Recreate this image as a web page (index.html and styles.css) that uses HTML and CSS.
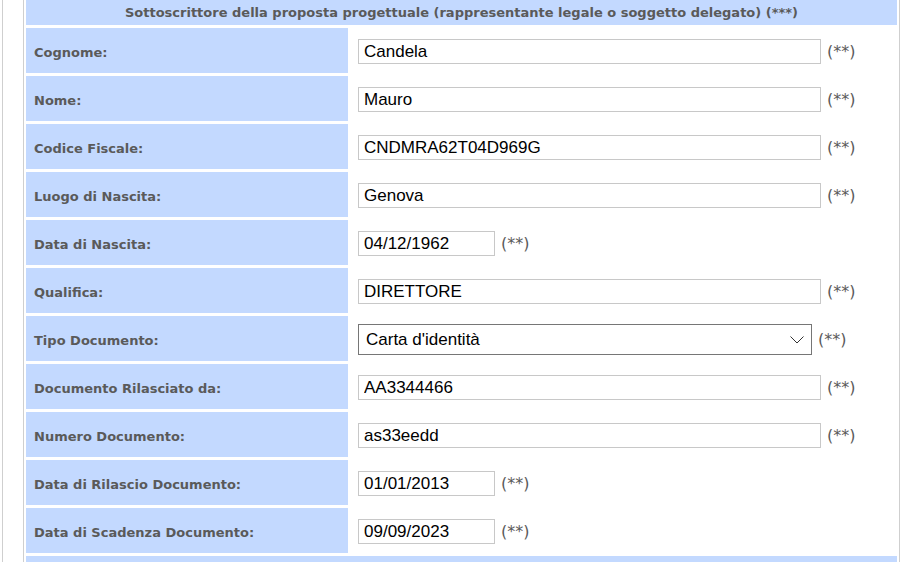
FILE: index.html
```html
<!DOCTYPE html>
<html lang="it">
<head>
    <meta charset="UTF-8">
    <meta name="viewport" content="width=device-width, initial-scale=1.0">
    <title>Sottoscrittore della proposta progettuale</title>
    <link rel="stylesheet" href="styles.css">
</head>
<body>

    <div class="page">
        <table class="form-table">
            <colgroup>
                <col class="col-label">
                <col class="col-field">
            </colgroup>
            <tr>
                <th colspan="2" class="section-title">Sottoscrittore della proposta progettuale (rappresentante legale o soggetto delegato) (***)</th>
            </tr>
            <tr>
                <td class="label">Cognome:</td>
                <td class="field"><input type="text" class="txt" value="Candela"> <span class="req">(**)</span></td>
            </tr>
            <tr>
                <td class="label">Nome:</td>
                <td class="field"><input type="text" class="txt" value="Mauro"> <span class="req">(**)</span></td>
            </tr>
            <tr>
                <td class="label">Codice Fiscale:</td>
                <td class="field"><input type="text" class="txt" value="CNDMRA62T04D969G"> <span class="req">(**)</span></td>
            </tr>
            <tr>
                <td class="label">Luogo di Nascita:</td>
                <td class="field"><input type="text" class="txt" value="Genova"> <span class="req">(**)</span></td>
            </tr>
            <tr>
                <td class="label">Data di Nascita:</td>
                <td class="field"><input type="text" class="txt date" value="04/12/1962"> <span class="req">(**)</span></td>
            </tr>
            <tr>
                <td class="label">Qualifica:</td>
                <td class="field"><input type="text" class="txt" value="DIRETTORE"> <span class="req">(**)</span></td>
            </tr>
            <tr>
                <td class="label">Tipo Documento:</td>
                <td class="field">
                    <span class="select-wrap">
                        <select class="sel">
                            <option>Carta d'identità</option>
                            <option>Passaporto</option>
                            <option>Patente di guida</option>
                        </select>
                        <svg class="chevron" width="14" height="8" viewBox="0 0 14 8"><path d="M0.5 0.5 L7 7 L13.5 0.5" fill="none" stroke="#333" stroke-width="1"/></svg>
                    </span>
                    <span class="req">(**)</span>
                </td>
            </tr>
            <tr>
                <td class="label">Documento Rilasciato da:</td>
                <td class="field"><input type="text" class="txt" value="AA3344466"> <span class="req">(**)</span></td>
            </tr>
            <tr>
                <td class="label">Numero Documento:</td>
                <td class="field"><input type="text" class="txt" value="as33eedd"> <span class="req">(**)</span></td>
            </tr>
            <tr>
                <td class="label">Data di Rilascio Documento:</td>
                <td class="field"><input type="text" class="txt date" value="01/01/2013"> <span class="req">(**)</span></td>
            </tr>
            <tr>
                <td class="label">Data di Scadenza Documento:</td>
                <td class="field"><input type="text" class="txt date" value="09/09/2023"> <span class="req">(**)</span></td>
            </tr>
            <tr>
                <th colspan="2" class="section-title">&nbsp;</th>
            </tr>
        </table>
    </div>

</body>
</html>
```

FILE: styles.css
```css
:root {
    --cell-blue: #c3d9ff;
    --label-color: #5a5a5a;
    --line-color: #cfcfcf;
}

body {
    margin: 0;
    background: #ffffff;
    font-family: 'DejaVu Sans', Verdana, sans-serif;
}

.page {
    margin-left: 2px;
    border-left: 1px solid var(--line-color);
    padding-left: 20px;
    min-height: 562px;
    overflow: hidden;
}

.form-table {
    width: 877px;
    margin-top: -4px;
    border: 1px solid var(--line-color);
    border-collapse: separate;
    border-spacing: 2px 3px;
    table-layout: fixed;
}

.col-label {
    width: 322px;
}

.section-title {
    height: 25px;
    padding: 0;
    background: var(--cell-blue);
    color: var(--label-color);
    font-size: 13px;
    font-weight: bold;
    text-align: center;
    vertical-align: middle;
}

.label {
    height: 45px;
    padding: 3px 8px 0 8px;
    box-sizing: border-box;
    background: var(--cell-blue);
    color: var(--label-color);
    font-size: 13px;
    font-weight: bold;
    vertical-align: middle;
    white-space: nowrap;
}

.field {
    height: 45px;
    padding: 1px 0 0 8px;
    box-sizing: border-box;
    background: #ffffff;
    vertical-align: middle;
    white-space: nowrap;
}

.txt {
    width: 463px;
    height: 25px;
    box-sizing: border-box;
    margin: 0;
    padding: 1px 5px 0 5px;
    border: 1px solid #c8c8c8;
    font-family: 'Liberation Sans', Arial, sans-serif;
    font-size: 17px;
    color: #000000;
    vertical-align: middle;
    outline: none;
}

.txt.date {
    width: 137px;
}

.req {
    font-family: 'DejaVu Sans', Verdana, sans-serif;
    font-size: 16px;
    color: var(--label-color);
    vertical-align: middle;
    margin-left: 1px;
}

.select-wrap {
    position: relative;
    display: inline-block;
    vertical-align: middle;
}

.sel {
    appearance: none;
    -webkit-appearance: none;
    width: 454px;
    height: 31px;
    box-sizing: border-box;
    margin: 0;
    padding: 1px 7px 0 7px;
    border: 1px solid #767676;
    border-radius: 0;
    background: #ffffff;
    font-family: 'Liberation Sans', Arial, sans-serif;
    font-size: 17px;
    color: #000000;
    display: block;
}

.chevron {
    position: absolute;
    right: 8px;
    top: 12px;
    pointer-events: none;
}
```
